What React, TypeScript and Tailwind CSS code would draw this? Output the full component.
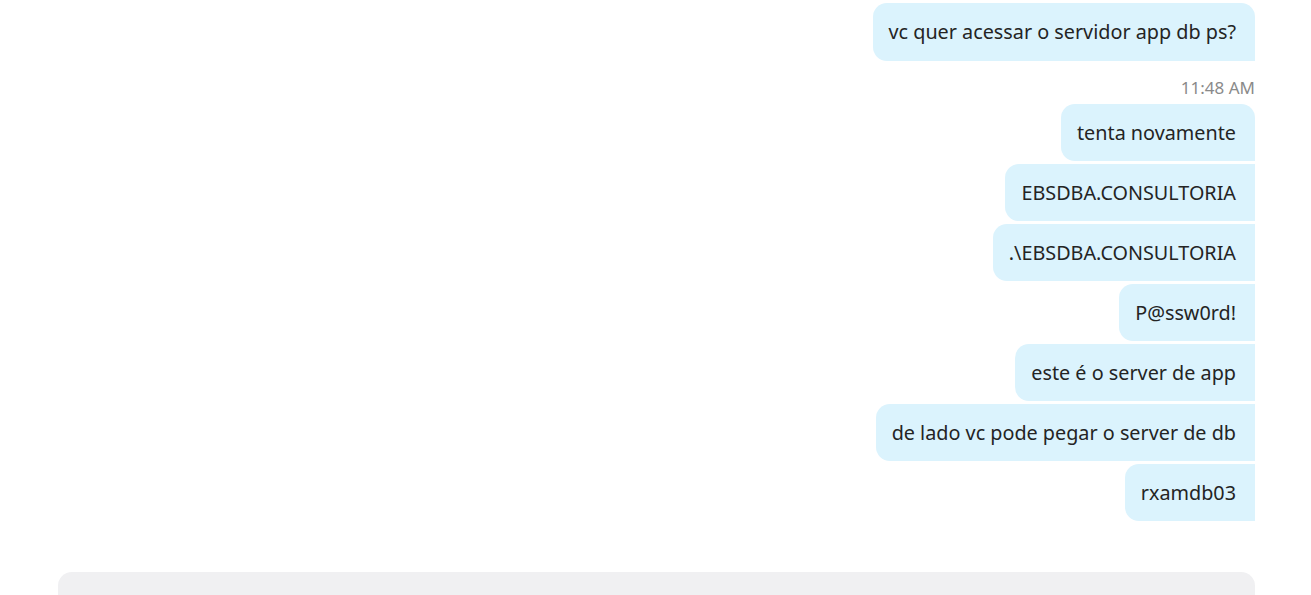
const messages = [
  "tenta novamente",
  "EBSDBA.CONSULTORIA",
  ".\\EBSDBA.CONSULTORIA",
  "P@ssw0rd!",
  "este é o server de app",
  "de lado vc pode pegar o server de db",
  "rxamdb03",
]

function Bubble({ text, first }: { text: string; first?: boolean }) {
  return (
    <div
      className={
        "bg-[#dbf3fd] text-[#242424] h-[57px] flex items-center pl-4 pr-[19px] text-[19.8px] rounded-l-[14px] " +
        (first ? "rounded-tr-[14px]" : "")
      }
    >
      {text}
    </div>
  )
}

export default function App() {
  return (
    <div
      className="w-[1311px] h-[595px] bg-white overflow-hidden flex flex-col"
      style={{ fontFamily: '"Noto Sans", "Open Sans", sans-serif' }}
    >
      <div className="flex flex-col items-end pl-[58px] pr-[56px] pt-[3px]">
        <div className="bg-[#dbf3fd] text-[#242424] h-[58px] flex items-center pl-4 pr-[19px] text-[19.8px] rounded-l-[14px] rounded-tr-[14px]">
          vc quer acessar o servidor app db ps?
        </div>
        <div className="mt-[16px] mb-[5px] text-[17px] leading-[22px] text-[#8a8a8a]">11:48 AM</div>
        <div className="flex flex-col items-end gap-[3px]">
          {messages.map((m, i) => (
            <Bubble key={i} text={m} first={i === 0} />
          ))}
        </div>
      </div>
      <div className="mt-[51px] ml-[58px] mr-[56px] h-[60px] bg-[#f0f0f2] rounded-t-[14px]" />
    </div>
  )
}
